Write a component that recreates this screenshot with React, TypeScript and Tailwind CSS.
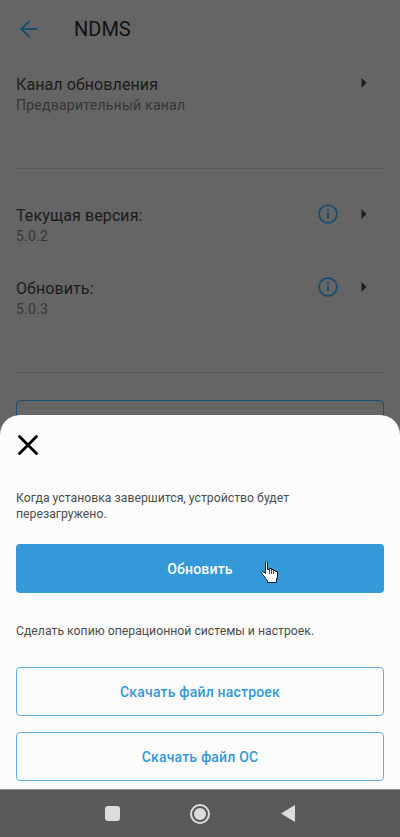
import { ArrowLeft, X } from 'lucide-react'

function Caret() {
    return (
        <svg width="6" height="10" viewBox="0 0 6 10" className="shrink-0">
            <path d="M0.5 0 L5.5 5 L0.5 10 Z" fill="#1d1d22" />
        </svg>
    )
}

function InfoIcon() {
    return (
        <svg width="20" height="20" viewBox="0 0 20 20" className="shrink-0">
            <circle cx="10" cy="10" r="8.9" fill="none" stroke="#174f70" strokeWidth="1.8" />
            <rect x="9" y="8.6" width="2" height="6" fill="#174f70" />
            <rect x="9" y="5.2" width="2" height="2" fill="#174f70" />
        </svg>
    )
}

function Row({ title, sub, info }: { title: string; sub: string; info?: boolean }) {
    return (
        <div className="flex items-start h-[42px]">
            <div className="flex-1 min-w-0">
                <p className="text-[16px] leading-[21px] tracking-[0.1px] text-[#1b1b1b]">{title}</p>
                <p className="text-[14px] leading-[21px] tracking-[0.25px] text-[#363636]">{sub}</p>
            </div>
            {info && <div className="mr-[23px] -mt-[1px]"><InfoIcon /></div>}
            <div className="mr-[17px] mt-[-2px] h-[21px] flex items-center"><Caret /></div>
        </div>
    )
}

function HandCursor() {
    return (
        <svg width="18" height="23" viewBox="0 0 18 23" className="absolute left-[261px] top-[15px]">
            <path
                d="M4.5 1.5 C4.5 .6 6.5 .6 6.5 1.5 L6.5 8.5 L8.5 8.5 L8.5 7.5 L10.5 7.5 L10.5 8.5 L12.5 8.5 L12.5 9.5 L14.5 9.5 L14.5 10.5 L16.5 10.5 L16.5 17.5 L15.5 17.5 L15.5 21.5 L6.5 21.5 L6.5 19.5 L4.5 17.5 L3.5 15.5 L1.5 13.5 L.5 11.5 L1.5 10.5 L3.5 11.5 L4.5 12.5 Z"
                fill="#fff"
                stroke="#0a1a2a"
                strokeWidth="1"
                strokeLinejoin="miter"
            />
            <path d="M8.5 8.5 V13 M10.5 8.5 V13 M12.5 9.5 V13" stroke="#0a1a2a" strokeWidth="0.8" fill="none" />
        </svg>
    )
}

export default function App() {
    return (
        <div className="relative w-[400px] h-[837px] overflow-hidden bg-[#656565] flex flex-col font-['Roboto',sans-serif]">
            <div className="flex-1 min-h-0">
                <header className="flex items-center h-[58px] pl-[16px]">
                    <ArrowLeft size={26} strokeWidth={1.7} color="#174f70" />
                    <h1 className="ml-[32px] text-[20px] text-[#111]">NDMS</h1>
                </header>
                <div className="px-[16px] pt-[16px]">
                    <Row title="Канал обновления" sub="Предварительный канал" />
                    <div className="h-px bg-[#585858] mt-[52px]" />
                    <div className="pt-[36px] flex flex-col gap-[31px]">
                        <Row title="Текущая версия:" sub="5.0.2" info />
                        <Row title="Обновить:" sub="5.0.3" info />
                    </div>
                    <div className="h-px bg-[#585858] mt-[52px]" />
                    <div className="mt-[27px] h-[48px] rounded-[4px] border border-[#174f70]" />
                </div>
            </div>

            {/* bottom sheet */}
            <div className="absolute left-0 right-0 top-[415px] h-[374px] bg-[#fcfcfc] rounded-t-[20px] px-[16px]">
                <div className="pt-[13px] -ml-[5px]">
                    <X size={34} strokeWidth={2} color="#000" />
                </div>
                <p className="mt-[28px] text-[12.25px] leading-[16px] text-[#4c4c4c] w-[300px]">
                    Когда установка завершится, устройство будет перезагружено.
                </p>
                <button className="mt-[22px] pt-px w-full h-[49px] rounded-[4px] bg-[#3598d8] text-white text-[14px] font-medium tracking-[0.2px]">
                    Обновить
                </button>
                <p className="mt-[30px] text-[12.25px] leading-[16px] text-[#4c4c4c]">
                    Сделать копию операционной системы и настроек.
                </p>
                <button className="mt-[28px] pt-px w-full h-[49px] rounded-[4px] border border-[#62aee0] text-[#3598d8] text-[14px] font-medium tracking-[0.2px]">
                    Скачать файл настроек
                </button>
                <button className="mt-[16px] pt-px w-full h-[49px] rounded-[4px] border border-[#62aee0] text-[#3598d8] text-[14px] font-medium tracking-[0.2px]">
                    Скачать файл ОС
                </button>
            </div>
            <div className="absolute left-0 top-[546px]"><HandCursor /></div>

            <nav className="h-[48px] bg-[#5a5a5a] border-t border-[#e0e0e0]/40 flex items-center relative z-10">
                <div className="ml-[105px] w-[15px] h-[15px] rounded-[3px] bg-[#dcdcdc]" />
                <div className="ml-[70px] w-[20px] h-[20px] rounded-full border-2 border-[#dcdcdc] flex items-center justify-center">
                    <div className="w-[12px] h-[12px] rounded-full bg-[#dcdcdc]" />
                </div>
                <svg width="14" height="17" viewBox="0 0 14 17" className="ml-[71px]">
                    <path d="M14 0 V17 L0 8.5 Z" fill="#dcdcdc" />
                </svg>
            </nav>
        </div>
    )
}
